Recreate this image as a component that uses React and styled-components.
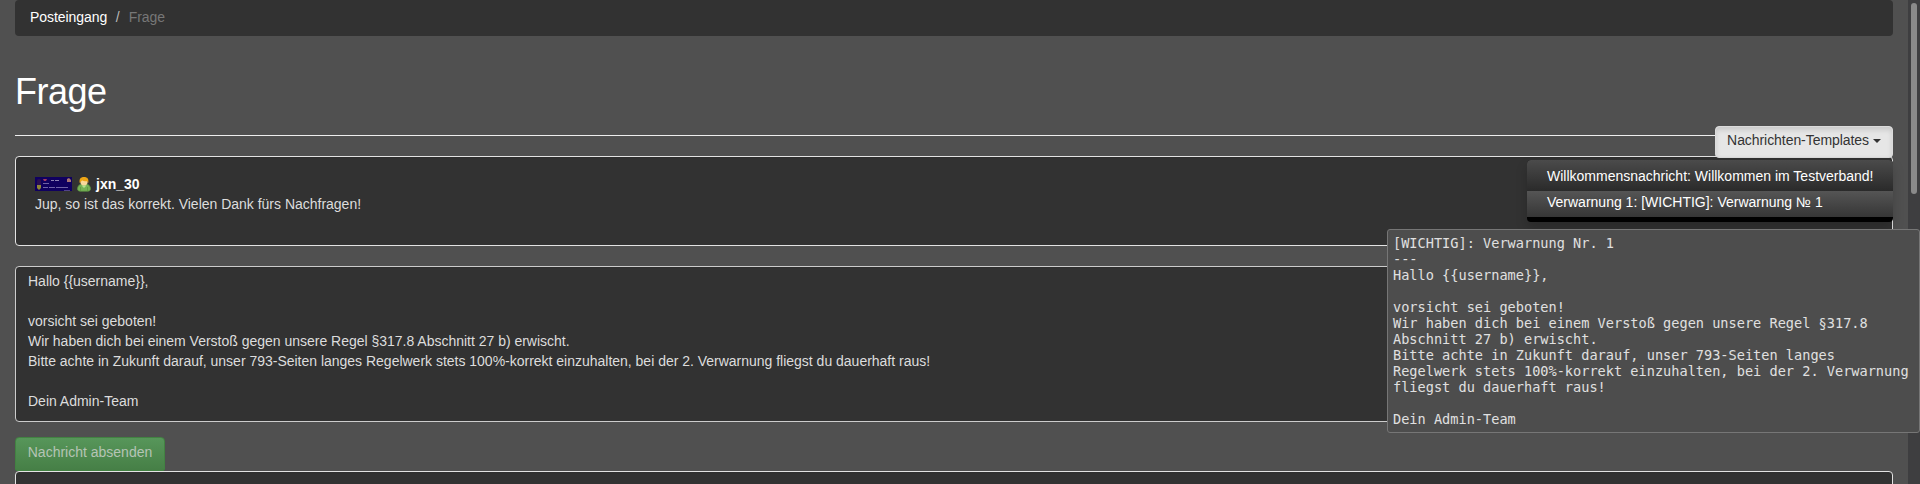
import React from "react";
import styled, { createGlobalStyle } from "styled-components";

const GlobalStyle = createGlobalStyle`
  * { box-sizing: border-box; }
  html, body { margin: 0; padding: 0; height: 484px; overflow: hidden; background: #505050; }
  body { font: 14px/20px "Liberation Sans", Arial, sans-serif; color: #ddd; }
`;

const Page = styled.div`
  display: flex;
  height: 484px;
  overflow: hidden;
  position: relative;
`;
const Content = styled.main`
  flex: 1;
  min-width: 0;
  padding: 0 15px;
`;
const ScrollTrack = styled.div`
  width: 12px;
  padding: 3px;
  background: #3e3e40;
`;
const ScrollThumb = styled.div`
  height: 191px;
  border-radius: 3px;
  background: #8a8a8a;
`;
const Breadcrumb = styled.nav`
  display: flex;
  height: 36px;
  padding: 7px 15px;
  border-radius: 4px;
  background: #323232;
`;
const Crumb = styled.span`
  letter-spacing: -0.05px;
  color: ${(p) => (p.$active ? "#777" : "#fff")};
`;
const Separator = styled.span`
  padding: 0 9px 0 8.5px;
  color: #bbb;
`;
const Title = styled.h1`
  margin: 36px 0 0;
  font-size: 36px;
  line-height: 40px;
  font-weight: 400;
  letter-spacing: -0.5px;
  color: #fff;
`;
const Divider = styled.hr`
  height: 1px;
  margin: 23px 0 20px;
  border: 0;
  background: #eee;
`;
const Panel = styled.section`
  height: ${(p) => p.$height}px;
  padding: ${(p) => p.$padding};
  border: 1px solid ${(p) => p.$border || "#e3e3e3"};
  border-radius: 4px;
  background: #323232;
  box-shadow: inset 0 1px 1px rgba(0, 0, 0, 0.05);
`;
const Author = styled.div`
  display: flex;
  align-items: center;
  gap: 4px;
  height: 20px;
  color: #fff;
  font-weight: 700;
`;
const Message = styled.div`
  white-space: pre-wrap;
  letter-spacing: -0.01px;
`;
const Submit = styled.button`
  display: block;
  width: 150px;
  height: 34px;
  margin-top: 15px;
  padding: 0 0 4px;
  border: 1px solid #428242;
  border-radius: 4px 4px 2px 2px;
  background: linear-gradient(#57965a, #467f46);
  color: #b5c4b5;
  font: inherit;
`;
const Templates = styled.div`
  position: absolute;
  top: 126px;
  right: 27px;
  display: flex;
  flex-direction: column;
  align-items: flex-end;
`;
const Toggle = styled.button`
  display: flex;
  align-items: center;
  justify-content: flex-end;
  gap: 4px;
  width: 178px;
  height: 32px;
  padding: 0 11px 4px 0;
  border: 1px solid #dbdbdb;
  border-radius: 4px;
  background: #e6e6e6;
  box-shadow: inset 0 3px 5px rgba(0, 0, 0, 0.125);
  color: #333;
  font: inherit;
  letter-spacing: -0.06px;
`;
const Caret = styled.span`
  margin-top: 2px;
  border: 4px solid transparent;
  border-top-color: #333;
  border-bottom: 0;
`;
const Menu = styled.div`
  width: 366px;
  height: 62px;
  margin-top: 2px;
  border-radius: 4px;
  overflow: hidden;
  background: #000;
  box-shadow: 0 6px 12px rgba(0, 0, 0, 0.175);
`;
const MenuItem = styled.div`
  height: ${(p) => p.$height}px;
  padding: ${(p) => p.$top}px 20px 0;
  background: linear-gradient(${(p) => p.$from}, ${(p) => p.$to});
  color: #fff;
  white-space: nowrap;
`;
const Tooltip = styled.div`
  position: absolute;
  left: 1387px;
  top: 229px;
  width: 533px;
  height: 204px;
  padding: 5px 5px 0;
  border: 1px solid #767676;
  border-radius: 3px;
  background: #4d4d4d;
  color: #e0e0e0;
  font: 13.6px/16px "DejaVu Sans Mono", monospace;
  white-space: pre;
`;

const Banner = () => (
  <svg width="37" height="14" viewBox="0 0 37 14">
    <rect width="37" height="14" fill="#10005f" />
    <rect x="2" y="2" width="4" height="10" rx="2" fill="#2a104f" />
    <path d="M2 8h4v3l-2 2-2-2z" fill="#8f8738" />
    <path d="M8 2h4l-1 2H9z" fill="#a23b62" />
    <path d="M16 3.500h3M20 3.500h4" stroke="#8d82b4" strokeWidth="1" />
    <path d="M32 2l2-1 2 2v2h-4z" fill="#a87372" />
    <path d="M8 6.500h6" stroke="#6e60a4" strokeWidth="1" />
    <path d="M8 10.500h5M14 10.500h6M21 10.500h12" stroke="#6f62a6" strokeWidth="1.2" />
    <path d="M29 13.500h6" stroke="#51428a" strokeWidth="1" />
  </svg>
);

const UserIcon = () => (
  <svg width="16" height="16" viewBox="0 0 16 16">
    <path d="M1.500 13c0-3 2-4.700 4-4.700h5c2 0 4 1.700 4 4.700 0 1.500-1.500 2.200-2.500 2.200H4c-1 0-2.500-.7-2.500-2.200z" fill="#76b256" stroke="#5b9440" strokeWidth=".7" />
    <path d="M5.500 9.500L8 12l2.500-2.500z" fill="#b3e58f" />
    <path d="M4.500 11v4M11.500 11v4" stroke="#5b9440" strokeWidth=".7" />
    <circle cx="8" cy="5.700" r="3.700" fill="#f8d99b" />
    <path d="M3.700 7C3 3 4.500 1 8 1s5 2 4.300 6l-1-1.700C9 5.500 7 5 6 4.300 5.700 5.300 4.700 6 3.700 7z" fill="#eda516" />
  </svg>
);

const letter = `Hallo {{username}},

vorsicht sei geboten!
Wir haben dich bei einem Verstoß gegen unsere Regel §317.8 Abschnitt 27 b) erwischt.
Bitte achte in Zukunft darauf, unser 793-Seiten langes Regelwerk stets 100%-korrekt einzuhalten, bei der 2. Verwarnung fliegst du dauerhaft raus!

Dein Admin-Team`;

const preview = `[WICHTIG]: Verwarnung Nr. 1
---
Hallo {{username}},

vorsicht sei geboten!
Wir haben dich bei einem Verstoß gegen unsere Regel §317.8
Abschnitt 27 b) erwischt.
Bitte achte in Zukunft darauf, unser 793-Seiten langes
Regelwerk stets 100%-korrekt einzuhalten, bei der 2. Verwarnung
fliegst du dauerhaft raus!

Dein Admin-Team`;

const Gap = styled.div`
  height: ${(p) => p.$size}px;
`;

export default function App() {
  return (
    <Page>
      <GlobalStyle />
      <Content>
        <Breadcrumb>
          <Crumb>Posteingang</Crumb>
          <Separator>/</Separator>
          <Crumb $active>Frage</Crumb>
        </Breadcrumb>
        <Title>Frage</Title>
        <Divider />
        <Panel $height={90} $padding="17px 19px">
          <Author>
            <Banner />
            <UserIcon />
            <span>jxn_30</span>
          </Author>
          <Message>Jup, so ist das korrekt. Vielen Dank fürs Nachfragen!</Message>
        </Panel>
        <Gap $size={20} />
        <Panel $height={156} $padding="4px 12px" $border="#ccc">
          <Message>{letter}</Message>
        </Panel>
        <Submit>Nachricht absenden</Submit>
        <Panel $height={90} $padding="19px" />
      </Content>
      <ScrollTrack>
        <ScrollThumb />
      </ScrollTrack>
      <Templates>
        <Toggle>
          Nachrichten-Templates
          <Caret />
        </Toggle>
        <Menu>
          <MenuItem $height={31} $top={6} $from="#4b4b4b" $to="#2a2a2a">
            Willkommensnachricht: Willkommen im Testverband!
          </MenuItem>
          <MenuItem $height={26} $top={1} $from="#555" $to="#363636">
            Verwarnung 1: [WICHTIG]: Verwarnung № 1
          </MenuItem>
        </Menu>
      </Templates>
      <Tooltip>{preview}</Tooltip>
    </Page>
  );
}
